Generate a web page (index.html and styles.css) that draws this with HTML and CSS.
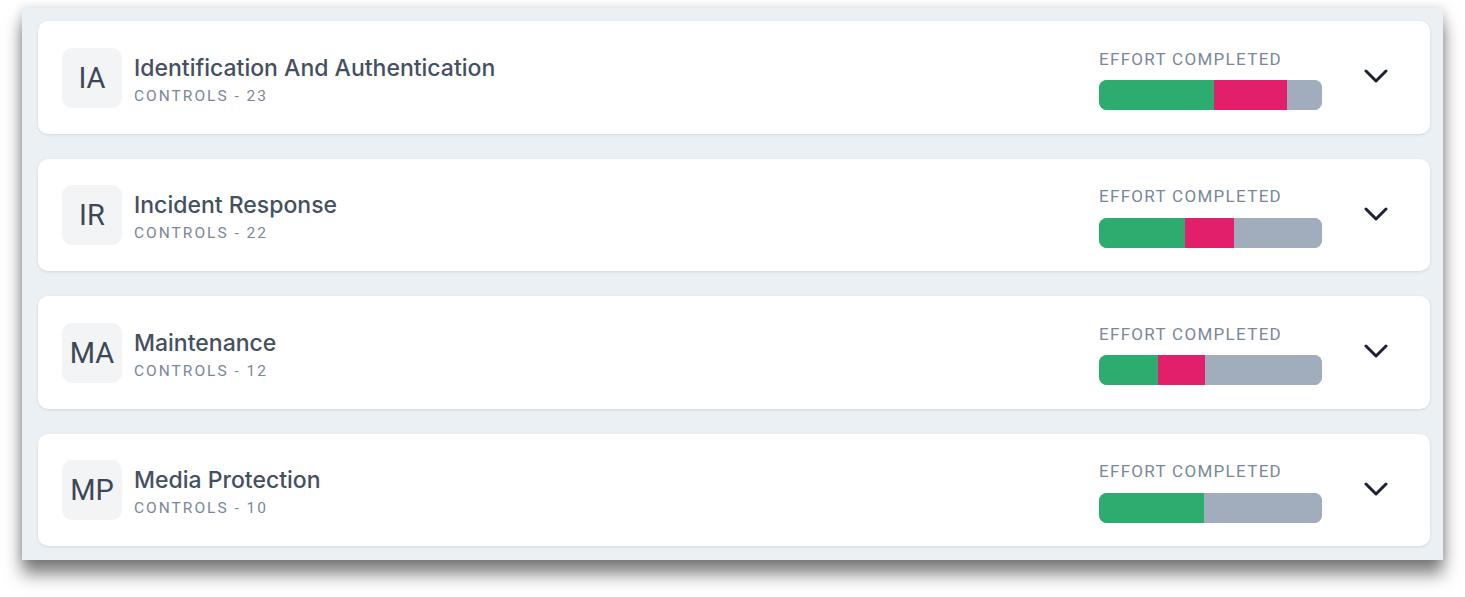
FILE: index.html
```html
<!DOCTYPE html>
<html>
<head>
<meta charset="utf-8">
<link rel="stylesheet" href="styles.css">
</head>
<body>
<div class="window">
  <div class="card">
    <div class="avatar">IA</div>
    <div class="info">
      <div class="title">Identification And Authentication</div>
      <div class="sub">CONTROLS - 23</div>
    </div>
    <div class="effort">
      <div class="effort-label">EFFORT COMPLETED</div>
      <div class="bar">
        <span class="seg green" style="width:115px"></span>
        <span class="seg pink" style="width:73px"></span>
        <span class="seg gray"></span>
      </div>
    </div>
    <button class="toggle"><svg width="24" height="24" viewBox="0 0 24 24"><path d="M2 8l10 10 10-10" fill="none" stroke="#1c2231" stroke-width="3" stroke-linecap="round" stroke-linejoin="round"/></svg></button>
  </div>
  <div class="card">
    <div class="avatar">IR</div>
    <div class="info">
      <div class="title">Incident Response</div>
      <div class="sub">CONTROLS - 22</div>
    </div>
    <div class="effort">
      <div class="effort-label">EFFORT COMPLETED</div>
      <div class="bar">
        <span class="seg green" style="width:86px"></span>
        <span class="seg pink" style="width:49px"></span>
        <span class="seg gray"></span>
      </div>
    </div>
    <button class="toggle"><svg width="24" height="24" viewBox="0 0 24 24"><path d="M2 8l10 10 10-10" fill="none" stroke="#1c2231" stroke-width="3" stroke-linecap="round" stroke-linejoin="round"/></svg></button>
  </div>
  <div class="card">
    <div class="avatar">MA</div>
    <div class="info">
      <div class="title">Maintenance</div>
      <div class="sub">CONTROLS - 12</div>
    </div>
    <div class="effort">
      <div class="effort-label">EFFORT COMPLETED</div>
      <div class="bar">
        <span class="seg green" style="width:59px"></span>
        <span class="seg pink" style="width:47px"></span>
        <span class="seg gray"></span>
      </div>
    </div>
    <button class="toggle"><svg width="24" height="24" viewBox="0 0 24 24"><path d="M2 8l10 10 10-10" fill="none" stroke="#1c2231" stroke-width="3" stroke-linecap="round" stroke-linejoin="round"/></svg></button>
  </div>
  <div class="card">
    <div class="avatar">MP</div>
    <div class="info">
      <div class="title">Media Protection</div>
      <div class="sub">CONTROLS - 10</div>
    </div>
    <div class="effort">
      <div class="effort-label">EFFORT COMPLETED</div>
      <div class="bar">
        <span class="seg green" style="width:105px"></span>
        <span class="seg gray"></span>
      </div>
    </div>
    <button class="toggle"><svg width="24" height="24" viewBox="0 0 24 24"><path d="M2 8l10 10 10-10" fill="none" stroke="#1c2231" stroke-width="3" stroke-linecap="round" stroke-linejoin="round"/></svg></button>
  </div>
</div>
</body>
</html>
```
FILE: styles.css
```css
html, body {
  margin: 0;
  padding: 0;
  background: #ffffff;
}
body {
  font-family: "Inter", "Liberation Sans", sans-serif;
  padding: 8px 22px 37px 22px;
}
.window {
  width: 1421px;
  box-sizing: border-box;
  background: #ebf0f4;
  padding: 13px 13px 14px 16px;
  display: flex;
  flex-direction: column;
  gap: 25px;
  box-shadow: 0 14px 16px rgba(0,0,0,0.5), 0 0 10px rgba(0,0,0,0.15);
}
.card {
  height: 112.5px;
  box-sizing: border-box;
  background: #fff;
  border-radius: 10px;
  box-shadow: 0 1px 3px rgba(30,40,60,0.12);
  display: flex;
  align-items: center;
  padding: 0 34px 0 24px;
}
.avatar {
  width: 60px;
  height: 60px;
  border-radius: 10px;
  background: #f3f4f6;
  color: #3d4757;
  font-family: "Roboto", sans-serif;
  font-size: 29px;
  display: flex;
  align-items: center;
  justify-content: center;
  flex: none;
  margin-top: 1px;
}
.info {
  margin-left: 12px;
  flex: 1;
  margin-top: 5px;
}
.title {
  font-family: "Inter", sans-serif;
  font-weight: 500;
  font-size: 23px;
  color: #454f62;
  line-height: 28px;
}
.sub {
  font-family: "Roboto", sans-serif;
  font-size: 15.5px;
  color: #7a879b;
  letter-spacing: 2px;
  margin-top: 4px;
  line-height: 20px;
}
.effort {
  width: 223px;
  flex: none;
  margin-top: 4.5px;
}
.effort-label {
  font-family: "Roboto", sans-serif;
  font-size: 17px;
  color: #7a879b;
  letter-spacing: 1.3px;
  line-height: 20px;
  margin-bottom: 11.5px;
}
.bar {
  display: flex;
  height: 30px;
  border-radius: 8px;
  overflow: hidden;
  background: #a1adbd;
}
.seg {
  display: block;
  height: 100%;
}
.green { background: #2cac6e; }
.pink { background: #e11f6b; }
.gray { flex: 1; background: #a1adbd; }
.toggle {
  margin-left: 34px;
  width: 40px;
  height: 40px;
  border: 0;
  background: transparent;
  padding: 0;
  display: flex;
  align-items: center;
  justify-content: center;
  flex: none;
  margin-top: -4px;
}
```
